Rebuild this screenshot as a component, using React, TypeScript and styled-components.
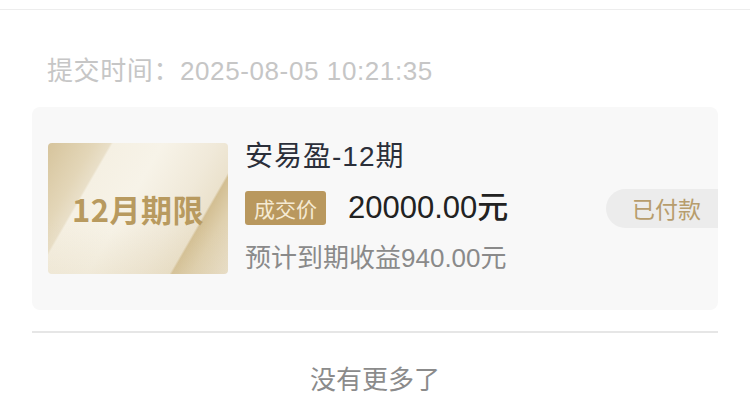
import React from "react";
import styled, { createGlobalStyle } from "styled-components";

const Global = createGlobalStyle`
  html, body { margin: 0; padding: 0; background: #ffffff; }
  body { font-family: "Liberation Sans", "Noto Sans CJK SC", sans-serif; }
  * { box-sizing: border-box; }
`;

const Page = styled.div`
  width: 750px;
  height: 402px;
  overflow: hidden;
  display: flex;
  flex-direction: column;
  background: #ffffff;
`;

const TopBar = styled.div`
  height: 10px;
  border-bottom: 1px solid #ededed;
  flex-shrink: 0;
`;

const SubmitTime = styled.div`
  padding: 44px 47px 18px;
  height: 97px;
  font-family: "Liberation Sans", "Noto Sans CJK SC", sans-serif;
  font-size: 26px;
  line-height: 34px;
  color: #c6c6c6;
  letter-spacing: 0.6px;
  white-space: nowrap;
`;

const Card = styled.div`
  margin: 0 32px;
  height: 203px;
  background: #f8f8f8;
  border-radius: 8px;
  display: flex;
  align-items: center;
  padding-left: 16px;
  position: relative;
  overflow: hidden;
  flex-shrink: 0;
`;

const Cover = styled.div`
  width: 180px;
  height: 131px;
  border-radius: 4px;
  flex-shrink: 0;
  display: flex;
  align-items: center;
  justify-content: center;
  background:
    linear-gradient(180deg, rgba(255, 255, 255, 0) 60%, rgba(220, 205, 170, 0.25) 100%),
    linear-gradient(
      120deg,
      #d6c49c 0%,
      #e3d6b8 18%,
      #e9dfc8 24.5%,
      #f5f0e3 25.5%,
      #f7f3e8 45%,
      #f0e9d9 66%,
      #ebe2cd 77%,
      #d3bf93 78%,
      #dfd0ae 86%,
      #ebe2cf 100%
    );
`;

const CoverLabel = styled.span`
  font-family: "Noto Sans CJK SC", sans-serif;
  font-weight: 700;
  font-size: 31px;
  color: #b89a5f;
  letter-spacing: 0.5px;
`;

const Info = styled.div`
  margin-left: 17px;
  display: flex;
  flex-direction: column;
  align-self: flex-start;
  padding-top: 33px;
`;

const Title = styled.div`
  font-family: "Liberation Sans", "Noto Sans CJK SC", sans-serif;
  font-size: 28px;
  line-height: 34px;
  color: #2b2f3a;
  letter-spacing: 1px;
`;

const PriceRow = styled.div`
  display: flex;
  align-items: center;
  margin-top: 17px;
`;

const Tag = styled.span`
  height: 34px;
  padding: 0 9px;
  border-radius: 3px;
  background: #b9985e;
  color: #f5ead3;
  font-family: "Noto Sans CJK SC", sans-serif;
  font-size: 21px;
  line-height: 34px;
`;

const Price = styled.span`
  margin-left: 22px;
  font-family: "Liberation Sans", "Noto Sans CJK SC", sans-serif;
  font-size: 31px;
  font-weight: 500;
  color: #222222;
  line-height: 34px;
`;

const Expected = styled.div`
  margin-top: 18px;
  font-family: "Liberation Sans", "Noto Sans CJK SC", sans-serif;
  font-size: 26px;
  line-height: 30px;
  color: #8a8a8a;
`;

const Status = styled.span`
  position: absolute;
  right: 0;
  top: 82px;
  height: 39px;
  width: 112px;
  padding-left: 26px;
  border-radius: 20px 0 0 20px;
  background: #ececec;
  color: #b79d6d;
  font-family: "Noto Sans CJK SC", sans-serif;
  font-size: 23px;
  line-height: 39px;
`;

const Divider = styled.div`
  margin: 21px 32px 0;
  height: 2px;
  background: #e6e6e6;
  flex-shrink: 0;
`;

const Footer = styled.div`
  margin-top: 28px;
  text-align: center;
  font-family: "Noto Sans CJK SC", sans-serif;
  font-size: 26px;
  line-height: 34px;
  color: #8b8b8b;
`;

export default function App() {
  return (
    <Page>
      <Global />
      <TopBar />
      <SubmitTime>提交时间：2025-08-05 10:21:35</SubmitTime>
      <Card>
        <Cover>
          <CoverLabel>12月期限</CoverLabel>
        </Cover>
        <Info>
          <Title>安易盈-12期</Title>
          <PriceRow>
            <Tag>成交价</Tag>
            <Price>20000.00元</Price>
          </PriceRow>
          <Expected>预计到期收益940.00元</Expected>
        </Info>
        <Status>已付款</Status>
      </Card>
      <Divider />
      <Footer>没有更多了</Footer>
    </Page>
  );
}
